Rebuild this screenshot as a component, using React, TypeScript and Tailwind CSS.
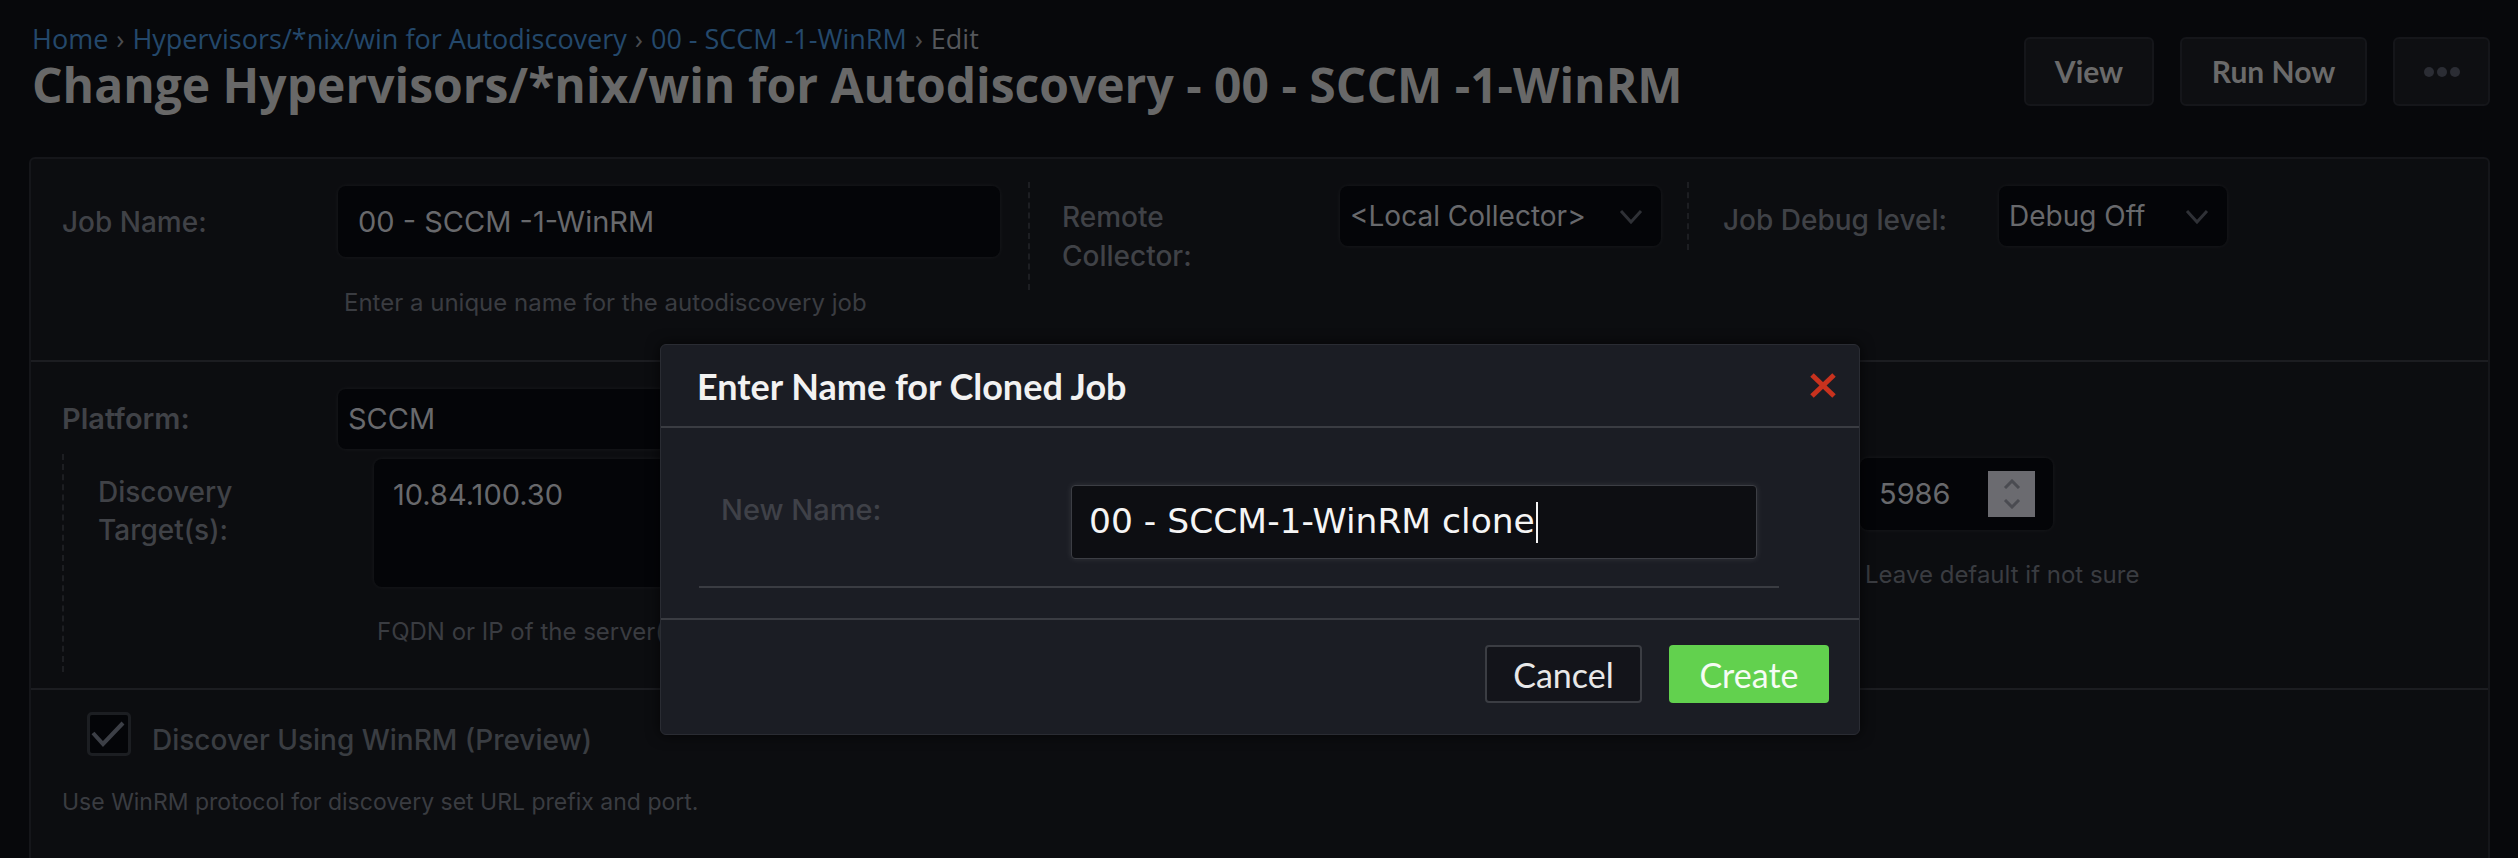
import React from "react";

function Chevron() {
  return (
    <svg width="24" height="15" viewBox="0 0 24 15" className="text-[#2f3136]">
      <polyline points="2,2 12,13 22,2" fill="none" stroke="currentColor" strokeWidth="3" />
    </svg>
  );
}

function Select({ width, label }: { width: string; label: string }) {
  return (
    <div
      className={`${width} h-[60px] flex items-center justify-between pl-[10px] pr-[18px] rounded-[8px] bg-[#040508] shadow-[0_0_5px_rgba(255,255,255,0.06)] text-[28px] text-[#68696c]`}
    >
      <span>{label}</span>
      <Chevron />
    </div>
  );
}

function Sep() {
  return <span className="text-[#4a4c50] mx-[8px]">›</span>;
}

export default function App() {
  return (
    <div className="relative w-[2518px] h-[858px] overflow-hidden bg-[#07080b] font-['Inter',sans-serif]">
      {/* page header */}
      <header className="flex items-start justify-between pl-[32px] pr-[28px]">
        <div className="pt-[24px] font-['Open_Sans',sans-serif]">
          <nav className="text-[27px] leading-[30px] text-[#24486b]">
            <span>Home</span>
            <Sep />
            <span>Hypervisors/*nix/win for Autodiscovery</span>
            <Sep />
            <span>00 - SCCM -1-WinRM</span>
            <Sep />
            <span className="text-[#55575b]">Edit</span>
          </nav>
          <h1 className="mt-[3px] text-[48px] leading-[56px] font-bold text-[#686868]">
            Change Hypervisors/*nix/win for Autodiscovery - 00 - SCCM -1-WinRM
          </h1>
        </div>
        <div className="flex gap-[26px] pt-[37px] font-['Lato',sans-serif] font-bold text-[30px] text-[#6a6a6a]">
          <button className="w-[130px] h-[69px] rounded-[6px] border-2 border-[#15161a] bg-[#0e0f12]">View</button>
          <button className="w-[187px] h-[69px] rounded-[6px] border-2 border-[#15161a] bg-[#0e0f12]">Run Now</button>
          <button className="w-[97px] h-[69px] rounded-[6px] border-2 border-[#15161a] bg-[#0e0f12] flex items-center justify-center gap-[3px]">
            <span className="w-[10px] h-[10px] rounded-full bg-[#2b2d34]" />
            <span className="w-[10px] h-[10px] rounded-full bg-[#2b2d34]" />
            <span className="w-[10px] h-[10px] rounded-full bg-[#2b2d34]" />
          </button>
        </div>
      </header>

      {/* job form */}
      <div className="ml-[29px] mt-[44px] w-[2461px] h-[760px] rounded-[6px] border-2 border-[#15161a] bg-[#0c0d10] text-[#404247]">
        <section className="flex items-start h-[203px] border-b-2 border-[#1c1d21] pt-[27px] pl-[31px]">
          <div className="w-[276px] mt-[18px] text-[28px] leading-[36px] font-medium">Job Name:</div>
          <div>
            <div className="w-[662px] h-[71px] flex items-center pl-[20px] rounded-[8px] bg-[#040508] shadow-[0_0_5px_rgba(255,255,255,0.06)] text-[29px] text-[#68696c]">
              00 - SCCM -1-WinRM
            </div>
            <p className="mt-[32px] pl-[6px] text-[24px] leading-[28px] text-[#3a3c41]">
              Enter a unique name for the autodiscovery job
            </p>
          </div>
          <div className="ml-[28px] -mt-[4px] h-[108px] border-l-2 border-dashed border-[#1d1e22]" />
          <div className="ml-[32px] w-[278px] mt-[12px] text-[28px] leading-[39px] font-medium">
            Remote
            <br />
            Collector:
          </div>
          <Select width="w-[321px]" label="<Local Collector>" />
          <div className="ml-[26px] -mt-[4px] h-[68px] border-l-2 border-dashed border-[#1d1e22]" />
          <div className="ml-[34px] w-[276px] mt-[16px] text-[28px] leading-[36px] font-medium">Job Debug level:</div>
          <Select width="w-[228px]" label="Debug Off" />
        </section>

        <section className="h-[328px] border-b-2 border-[#1c1d21] pt-[27px] pl-[31px]">
          <div className="flex items-start">
            <div className="w-[276px] mt-[12px] text-[29px] leading-[36px] font-semibold">Platform:</div>
            <div className="w-[662px] h-[60px] flex items-center pl-[10px] rounded-[8px] bg-[#040508] shadow-[0_0_5px_rgba(255,255,255,0.06)] text-[29px] text-[#68696c]">
              SCCM
            </div>
          </div>
          <div className="mt-[5px] h-[218px] flex items-start pt-[5px] pl-[34px] border-l-2 border-dashed border-[#1d1e22]">
            <div className="w-[276px] mt-[14px] text-[28px] leading-[38px] font-medium">
              Discovery
              <br />
              Target(s):
            </div>
            <div>
              <div className="w-[800px] h-[128px] pl-[19px] pt-[18px] rounded-[8px] bg-[#040508] shadow-[0_0_5px_rgba(255,255,255,0.06)] text-[29px] leading-[36px] text-[#68696c]">
                10.84.100.30
              </div>
              <p className="mt-[31px] pl-[3px] text-[24px] leading-[28px] text-[#3a3c41]">
                FQDN or IP of the server(s) to discover
              </p>
            </div>
            <div className="w-[686px] pl-[400px] mt-[14px] text-[28px] leading-[38px] font-medium">WinRM Port:</div>
            <div className="-mt-[1px]">
              <div className="w-[193px] h-[72px] flex items-center justify-between pl-[19px] pr-[18px] rounded-[8px] bg-[#040508] shadow-[0_0_5px_rgba(255,255,255,0.06)] text-[29px] text-[#68696c]">
                <span>5986</span>
                <span className="w-[47px] h-[46px] bg-[#6b6b70] flex flex-col items-center justify-center gap-[10px]">
                  <svg width="18" height="10" viewBox="0 0 18 10">
                    <polyline points="2,9 9,2 16,9" fill="none" stroke="#4a4b51" strokeWidth="3" />
                  </svg>
                  <svg width="18" height="10" viewBox="0 0 18 10">
                    <polyline points="2,1 9,8 16,1" fill="none" stroke="#4a4b51" strokeWidth="3" />
                  </svg>
                </span>
              </div>
              <p className="mt-[31px] pl-[5px] text-[24px] leading-[28px] text-[#3a3c41]">Leave default if not sure</p>
            </div>
          </div>
        </section>

        <section className="pt-[22px] pl-[31px]">
          <div className="flex items-start pl-[25px]">
            <span className="w-[44px] h-[44px] rounded-[5px] border-[3px] border-[#1c1e22] bg-[#040508]">
              <svg width="38" height="38" viewBox="0 0 38 38">
                <polyline points="3,18 13,29 33,8" fill="none" stroke="#3c3f46" strokeWidth="4" />
              </svg>
            </span>
            <span className="ml-[21px] mt-[10px] text-[28px] leading-[36px] font-medium text-[#3a3d42]">
              Discover Using WinRM (Preview)
            </span>
          </div>
          <p className="mt-[30px] text-[23px] leading-[28px] text-[#3a3c41]">
            Use WinRM protocol for discovery set URL prefix and port.
          </p>
        </section>
      </div>

      {/* clone dialog */}
      <div className="absolute left-[660px] top-[344px] w-[1200px] h-[391px] rounded-[6px] border border-[#2a2c33] bg-[#1b1d24] shadow-[0_0_14px_rgba(0,0,0,0.7)]">
        <div className="h-[83px] flex items-center justify-between pl-[36px] pr-[22px] border-b-2 border-[#3a3c42]">
          <h2 className="font-['Lato',sans-serif] font-bold text-[36px] text-[#f2f2f2]">Enter Name for Cloned Job</h2>
          <svg width="28" height="27" viewBox="0 0 28 27">
            <line x1="3" y1="3" x2="25" y2="24" stroke="#c8321e" strokeWidth="5" />
            <line x1="25" y1="3" x2="3" y2="24" stroke="#c8321e" strokeWidth="5" />
          </svg>
        </div>
        <div className="px-[38px] pt-[57px] pb-[30px] border-b-2 border-[#3a3c42]">
          <div className="flex items-start">
            <span className="w-[372px] pl-[22px] mt-[7px] text-[29px] leading-[36px] font-medium text-[#3f4148]">New Name:</span>
            <div className="w-[686px] h-[74px] flex items-center pl-[17px] rounded-[4px] border border-[#3c3e44] bg-[#0d0e12] shadow-[0_0_6px_rgba(255,255,255,0.1)] font-['DejaVu_Sans',sans-serif] text-[34.5px] text-[#f5f5f5]">
              <span>00 - SCCM-1-WinRM clone</span>
              <span className="ml-[1px] w-[2px] h-[41px] bg-[#f5f5f5]" />
            </div>
          </div>
          <div className="mt-[27px] w-[1080px] h-[2px] bg-[#3a3c42]" />
        </div>
        <div className="flex justify-end gap-[27px] pt-[25px] pr-[30px] font-['Lato',sans-serif] text-[34px]">
          <button className="w-[157px] h-[58px] rounded-[4px] border-2 border-[#3b3d43] bg-[#13141a] text-[#e8e8e8]">Cancel</button>
          <button className="w-[160px] h-[58px] rounded-[4px] bg-[#62d14e] text-[#f6fcf4]">Create</button>
        </div>
      </div>
    </div>
  );
}
